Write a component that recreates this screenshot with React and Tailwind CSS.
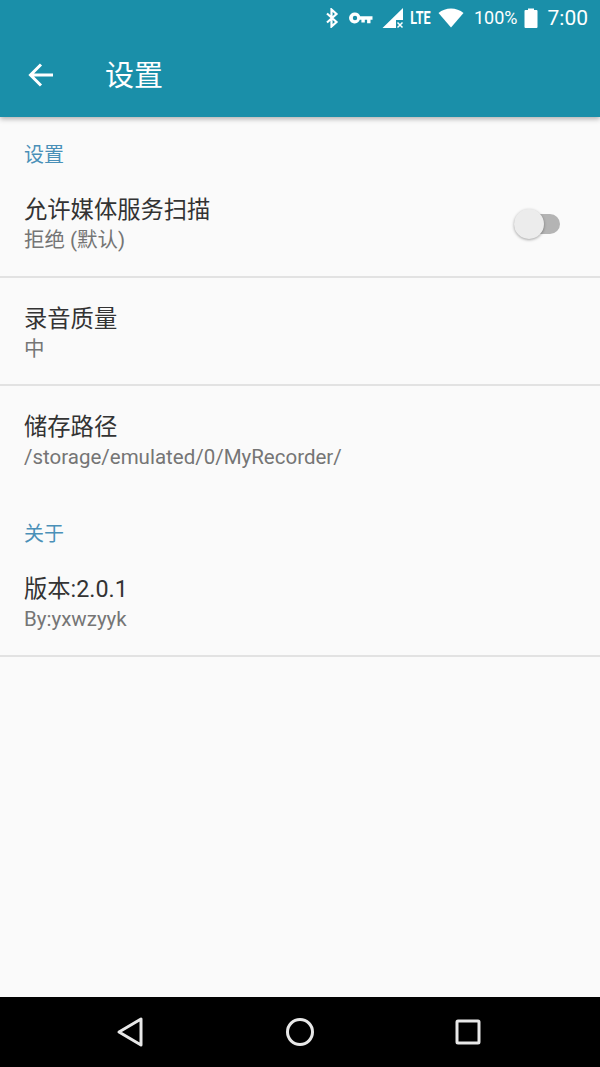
const font = "font-['Roboto','Noto_Sans_CJK_SC',sans-serif]"

function StatusBar() {
  return (
    <div className="h-9 flex items-center justify-end pr-[12px] text-white">
      {/* bluetooth */}
      <svg width="14" height="20" viewBox="0 0 14 20" fill="none" stroke="white" strokeWidth="2.200" className="mr-[10px]">
        <path d="M2 5.500L11.500 14L6.500 18.500V1.500L11.500 6L2 14.500" />
      </svg>
      {/* key */}
      <svg width="24" height="12" viewBox="0 0 24 12" fill="white" className="mr-[9px]">
        <path fillRule="evenodd" d="M6 0.500a5.500 5.500 0 0 1 5.200 3.800H23.500v3.400h-2v3.500h-3.400V7.700h-2.300v2.800h-3.400V7.700h-1.600A5.500 5.500 0 1 1 6 0.500zm0 3.300a2.200 2.200 0 1 0 0 4.400 2.200 2.200 0 0 0 0-4.400z" />
      </svg>
      {/* signal, no sim */}
      <svg width="22" height="22" viewBox="0 0 22 22" fill="white" className="mr-[6px]">
        <path d="M21 1V13H14V21H0.500z" />
        <path d="M15.500 15.500l5 5M20.500 15.500l-5 5" stroke="white" strokeWidth="1.500" />
      </svg>
      <span className="w-[21px] mr-[7px] flex justify-center text-[18px] leading-none font-['Roboto',sans-serif] font-bold scale-x-[0.7]">LTE</span>
      {/* wifi */}
      <svg width="26" height="20" viewBox="0 0 26 20" fill="white" className="mr-[10px]">
        <path d="M13 19.500L0.500 5C4 2 8.300 0.500 13 0.500s9 1.500 12.500 4.500z" />
      </svg>
      <span className="mr-[6px] text-[18px] leading-none font-['Roboto',sans-serif] font-normal">100%</span>
      {/* battery */}
      <svg width="14" height="20" viewBox="0 0 14 20" fill="white" className="mr-[10px]">
        <path d="M4 2V0.500h6V2h2.500a1 1 0 0 1 1 1v16a1 1 0 0 1-1 1h-11a1 1 0 0 1-1-1V3a1 1 0 0 1 1-1z" />
      </svg>
      <span className="text-[21px] leading-none font-['Roboto',sans-serif]">7:00</span>
    </div>
  )
}

function Row({ title, sub, divider = true, children, height = 'h-[108px] pt-1' }) {
  return (
    <div className={`${height} flex items-center justify-between pl-6 pr-10 ${divider ? 'border-b-2 border-[#e2e2e2]' : ''}`}>
      <div>
        <div className="text-[23.300px] leading-[32px] text-[#333333]">{title}</div>
        <div className="text-[20.500px] leading-[28px] text-[#757575]">{sub}</div>
      </div>
      {children}
    </div>
  )
}

function Toggle() {
  return (
    <div className="relative w-[46px] h-[20px] rounded-full bg-[#b4b4b4]">
      <div className="absolute left-0 top-[-5px] w-[30px] h-[30px] rounded-full bg-[#ececec] shadow-[0_1px_3px_rgba(0,0,0,0.35)]" />
    </div>
  )
}

function SectionLabel({ children, className = '' }) {
  return <div className={`pl-6 text-[20px] leading-[28px] text-[#4a90b8] ${className}`}>{children}</div>
}

export default function App() {
  return (
    <div className={`w-[600px] h-[1067px] flex flex-col bg-[#fafafa] overflow-hidden ${font}`}>
      <div className="relative h-[117px] shrink-0 bg-[#1a8fa9] shadow-[0_2px_5px_rgba(0,0,0,0.3)]">
        <StatusBar />
        <div className="flex items-center h-[81px] pl-[28px]">
          <svg width="26" height="26" viewBox="0 0 26 26" fill="none" stroke="white" strokeWidth="3" className="mb-[3px]">
            <path d="M25 13H3M13 2.500L2.500 13L13 23.500" />
          </svg>
          <span className="ml-[51px] text-[29px] text-white leading-none">设置</span>
        </div>
      </div>

      <div className="flex-1">
        <SectionLabel className="pt-6">设置</SectionLabel>
        <Row title="允许媒体服务扫描" sub="拒绝 (默认)" height="h-[109px] pt-[3px]">
          <Toggle />
        </Row>
        <Row title="录音质量" sub="中" />
        <Row title="储存路径" sub="/storage/emulated/0/MyRecorder/" divider={false} height="h-[106px] pt-1" />
        <SectionLabel className="pt-[28px]">关于</SectionLabel>
        <Row title="版本:2.0.1" sub="By:yxwzyyk" height="h-[109px] pt-[3px]" />
      </div>

      <div className="h-[70px] shrink-0 bg-black flex items-center">
        <svg width="30" height="34" viewBox="0 0 30 34" fill="none" stroke="#e8e8e8" strokeWidth="3" strokeLinejoin="round" className="ml-[116px]">
          <path d="M25 4V30L3 17z" />
        </svg>
        <svg width="30" height="30" viewBox="0 0 30 30" fill="none" stroke="#e8e8e8" strokeWidth="3" className="ml-[139px]">
          <circle cx="15" cy="15" r="12.500" />
        </svg>
        <svg width="26" height="26" viewBox="0 0 26 26" fill="none" stroke="#e8e8e8" strokeWidth="3" strokeLinejoin="round" className="ml-[140px]">
          <rect x="2" y="2" width="22" height="22" rx="1" />
        </svg>
      </div>
    </div>
  )
}
